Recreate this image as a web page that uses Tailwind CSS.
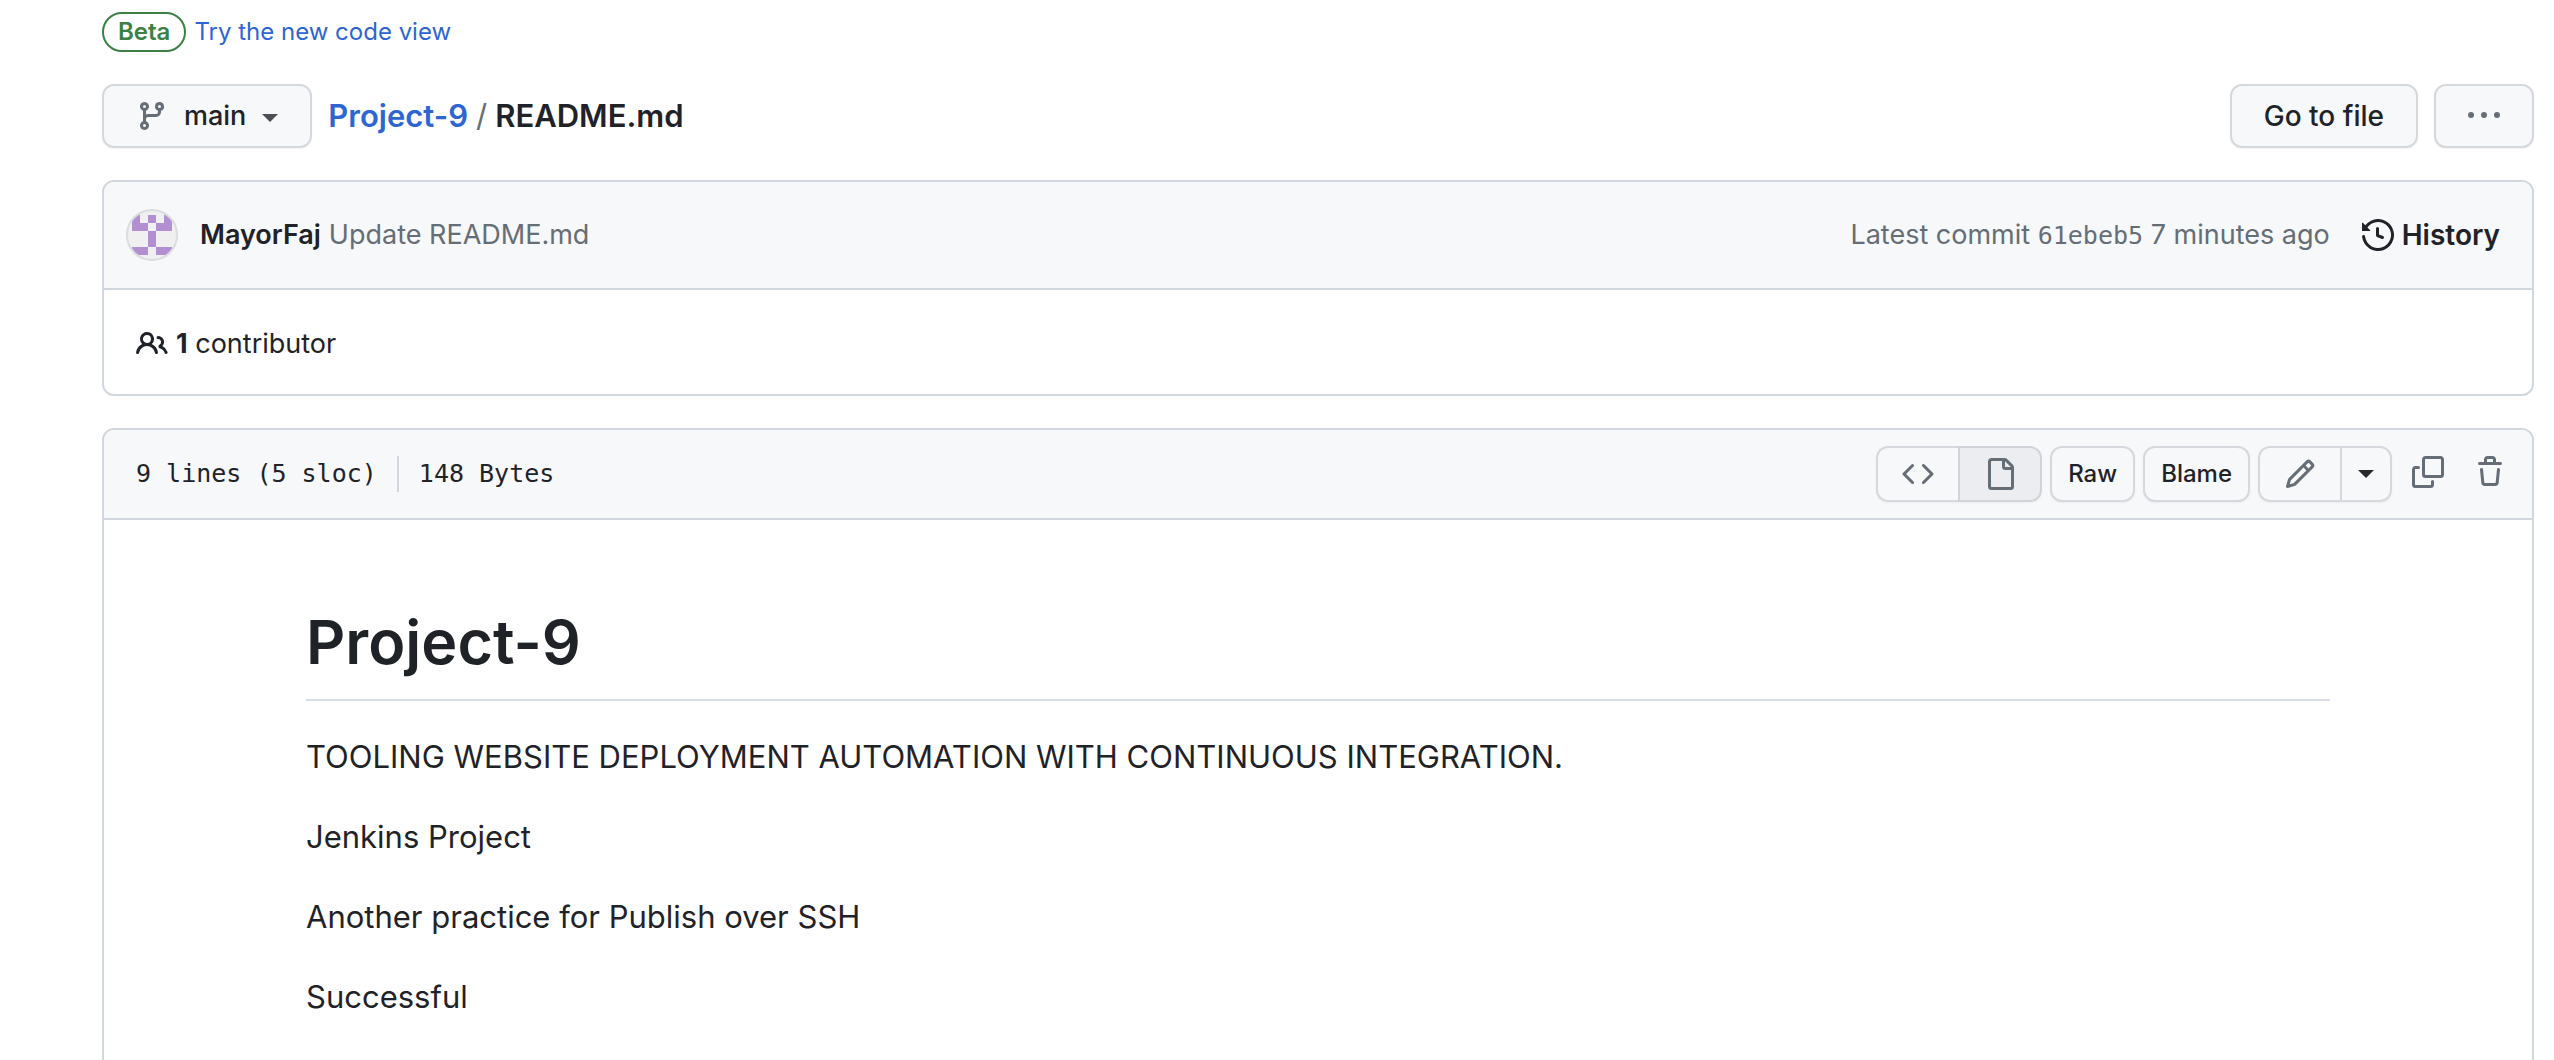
<!DOCTYPE html>
<html lang="en">
<head>
<meta charset="utf-8">
<title>Project-9/README.md</title>
<script src="https://cdn.jsdelivr.net/npm/@tailwindcss/browser@4"></script>
</head>
<body class="bg-white font-[Inter,sans-serif] text-[27px] leading-[42px] text-[#1f2328]">
<main class="ml-[102px] mr-5 pt-3 pb-16">

  <div class="flex items-center gap-2">
    <span class="flex h-10 items-center rounded-full border-2 border-[#3c8143] px-[14px] text-[24px] font-semibold text-[#3c8143]">Beta</span>
    <a href="#" class="text-[24px] leading-10 text-[#2d66d3]">Try the new code view</a>
  </div>

  <div class="mt-8 flex items-center">
    <button type="button" class="flex h-16 items-center rounded-xl border-2 border-[#d5d8dc] bg-[#f6f8fa] px-8 font-medium shadow-xs">
      <svg class="size-8 fill-[#656d76]" viewBox="0 0 16 16" aria-hidden="true"><path d="M9.5 3.25a2.25 2.25 0 1 1 3 2.122V6A2.5 2.5 0 0 1 10 8.5H6a1 1 0 0 0-1 1v1.128a2.251 2.251 0 1 1-1.5 0V5.372a2.25 2.25 0 1 1 1.5 0v1.836A2.493 2.493 0 0 1 6 7h4a1 1 0 0 0 1-1v-.628A2.25 2.25 0 0 1 9.5 3.25Zm-6 0a.75.75 0 1 0 1.5 0 .75.75 0 0 0-1.5 0Zm8.25-.75a.75.75 0 1 0 0 1.5.75.75 0 0 0 0-1.5ZM4.25 12a.75.75 0 1 0 0 1.5.75.75 0 0 0 0-1.5Z"/></svg>
      <span class="ml-4">main</span>
      <svg class="ml-4 mt-1 h-2 w-4 fill-[#4b4f54]" viewBox="0 0 16 8" aria-hidden="true"><path d="M0 0h16L8 8Z"/></svg>
    </button>
    <h2 class="ml-4 flex gap-2 text-[31px] leading-[48px] font-semibold">
      <a href="#" class="text-[#2d66d3]">Project-9</a><span class="font-normal text-[#656d76]">/</span><span>README.md</span>
    </h2>
    <button type="button" class="ml-auto h-16 rounded-xl border-2 border-[#d5d8dc] bg-[#f6f8fa] px-8 text-[28px] font-medium shadow-xs">Go to file</button>
    <button type="button" aria-label="More options" class="ml-4 flex h-16 items-center rounded-xl border-2 border-[#d5d8dc] bg-[#f6f8fa] px-8 shadow-xs">
      <svg class="size-8 fill-[#656d76]" viewBox="0 0 16 16" aria-hidden="true"><path d="M8 9a1.5 1.5 0 1 0 0-3 1.5 1.5 0 0 0 0 3ZM1.5 9a1.5 1.5 0 1 0 0-3 1.5 1.5 0 0 0 0 3Zm13 0a1.5 1.5 0 1 0 0-3 1.5 1.5 0 0 0 0 3Z"/></svg>
    </button>
  </div>

  <section class="mt-8 rounded-xl border-2 border-[#d0d7de]">
    <div class="flex h-[108px] items-center rounded-t-[10px] border-b-2 border-[#d0d7de] bg-[#f6f8fa] pr-8 pl-[22px]">
      <svg class="size-[52px]" viewBox="0 0 52 52" role="img" aria-label="MayorFaj">
        <defs><clipPath id="avatar"><circle cx="26" cy="26" r="24"/></clipPath></defs>
        <circle cx="26" cy="26" r="25" fill="#f0f0f0" stroke="#dadcdf" stroke-width="2"/>
        <path clip-path="url(#avatar)" fill="#b18fd1" d="M6 6h8v8h8v8H6ZM22 6h8v8h-8ZM38 6h8v16H30v-8h8ZM22 22h8v16h-8ZM6 38h16v8H6ZM30 38h16v8H30Z"/>
      </svg>
      <a href="#" class="ml-[22px] font-semibold">MayorFaj</a>
      <a href="#" class="ml-2 text-[#656d76]">Update README.md</a>
      <p class="ml-auto text-[#656d76]">Latest commit <a href="#" class="font-['DejaVu_Sans_Mono',monospace] text-[25px]">61ebeb5</a> 7 minutes ago</p>
      <a href="#" class="ml-8 flex items-center gap-2 text-[28px] font-semibold">
        <svg class="size-8 fill-[#1f2328]" viewBox="0 0 16 16" aria-hidden="true"><path d="m.427 1.927 1.215 1.215a8.002 8.002 0 1 1-1.6 5.685.75.75 0 1 1 1.493-.154 6.5 6.5 0 1 0 1.18-4.458l1.358 1.358A.25.25 0 0 1 3.896 6H.25A.25.25 0 0 1 0 5.75V2.104a.25.25 0 0 1 .427-.177ZM7.75 4a.75.75 0 0 1 .75.75v2.992l2.028.812a.75.75 0 0 1-.557 1.392l-2.5-1A.751.751 0 0 1 7 8.25v-3.5A.75.75 0 0 1 7.75 4Z"/></svg>
        History</a>
    </div>
    <div class="flex h-[104px] items-center gap-2 px-8 pt-1">
      <svg class="size-8 fill-[#1f2328]" viewBox="0 0 16 16" aria-hidden="true"><path d="M2 5.5a3.5 3.5 0 1 1 5.898 2.549 5.508 5.508 0 0 1 3.034 4.084.75.75 0 1 1-1.482.235 4 4 0 0 0-7.9 0 .75.75 0 0 1-1.482-.236A5.507 5.507 0 0 1 3.102 8.05 3.493 3.493 0 0 1 2 5.5ZM11 4a3.001 3.001 0 0 1 2.22 5.018 5.01 5.01 0 0 1 2.56 3.012.749.749 0 0 1-.885.954.752.752 0 0 1-.549-.514 3.507 3.507 0 0 0-2.522-2.372.75.75 0 0 1-.574-.73v-.352a.75.75 0 0 1 .416-.672A1.5 1.5 0 0 0 11 5.5.75.75 0 0 1 11 4Zm-5.5-.5a2 2 0 1 0-.001 3.999A2 2 0 0 0 5.5 3.5Z"/></svg>
      <a href="#"><strong class="font-bold">1</strong> contributor</a>
    </div>
  </section>

  <section class="mt-8 rounded-xl border-2 border-[#d0d7de]">
    <div class="flex h-[90px] items-center rounded-t-[10px] border-b-2 border-[#d0d7de] bg-[#f6f8fa] pr-[26px] pl-8">
      <p class="flex items-center gap-5 font-['DejaVu_Sans_Mono',monospace] text-[25px] leading-9">
        <span>9 lines (5 sloc)</span><span class="h-9 w-[2px] bg-[#d0d7de]"></span><span>148 Bytes</span>
      </p>
      <div class="ml-auto flex items-center gap-2 text-[24px] font-medium">
        <div class="flex h-14 rounded-xl shadow-xs">
          <button type="button" aria-label="Display the source" class="flex w-[82px] items-center justify-center rounded-l-xl border-2 border-r-0 border-[#d5d8dc] bg-[#f6f8fa]"><svg class="size-8 fill-[#656d76]" viewBox="0 0 16 16" aria-hidden="true"><path d="m11.28 3.22 4.25 4.25a.75.75 0 0 1 0 1.06l-4.25 4.25a.749.749 0 0 1-1.275-.326.749.749 0 0 1 .215-.734L13.94 8l-3.72-3.72a.749.749 0 0 1 .326-1.275.749.749 0 0 1 .734.215Zm-6.56 0a.751.751 0 0 1 1.042.018.751.751 0 0 1 .018 1.042L2.06 8l3.72 3.72a.749.749 0 0 1-.326 1.275.749.749 0 0 1-.734-.215L.47 8.53a.75.75 0 0 1 0-1.06Z"/></svg></button>
          <button type="button" aria-label="Display the rendered file" class="flex w-[84px] items-center justify-center rounded-r-xl border-2 border-[#d0d3d8] bg-[#ecedf1]"><svg class="size-8 fill-[#656d76]" viewBox="0 0 16 16" aria-hidden="true"><path d="M2 1.75C2 .784 2.784 0 3.75 0h6.586c.464 0 .909.184 1.237.513l2.914 2.914c.329.328.513.773.513 1.237v9.586A1.75 1.75 0 0 1 13.25 16h-9.5A1.75 1.75 0 0 1 2 14.25Zm1.75-.25a.25.25 0 0 0-.25.25v12.5c0 .138.112.25.25.25h9.5a.25.25 0 0 0 .25-.25V6h-2.75A1.75 1.75 0 0 1 9 4.25V1.5Zm6.75.062V4.25c0 .138.112.25.25.25h2.688l-.011-.013-2.914-2.914-.013-.011Z"/></svg></button>
        </div>
        <button type="button" class="h-14 rounded-xl border-2 border-[#d5d8dc] bg-[#f6f8fa] px-4 shadow-xs">Raw</button>
        <button type="button" class="h-14 rounded-xl border-2 border-[#d5d8dc] bg-[#f6f8fa] px-4 shadow-xs">Blame</button>
        <div class="flex h-14 rounded-xl shadow-xs">
          <button type="button" aria-label="Edit this file" class="flex w-[82px] items-center justify-center rounded-l-xl border-2 border-r-0 border-[#d5d8dc] bg-[#f6f8fa]"><svg class="size-8 fill-[#656d76]" viewBox="0 0 16 16" aria-hidden="true"><path d="M11.013 1.427a1.75 1.75 0 0 1 2.474 0l1.086 1.086a1.75 1.75 0 0 1 0 2.474l-8.61 8.61c-.21.21-.47.364-.756.445l-3.251.93a.75.75 0 0 1-.927-.928l.929-3.25c.081-.286.235-.547.445-.758l8.61-8.61Zm.176 4.823L9.75 4.81l-6.286 6.287a.253.253 0 0 0-.064.108l-.558 1.953 1.953-.558a.253.253 0 0 0 .108-.064Zm1.238-3.763a.25.25 0 0 0-.354 0L10.811 3.75l1.439 1.44 1.263-1.263a.25.25 0 0 0 0-.354Z"/></svg></button>
          <button type="button" aria-label="More edit options" class="flex w-[52px] items-center justify-center rounded-r-xl border-2 border-[#d5d8dc] bg-[#f6f8fa]"><svg class="h-2 w-4 fill-[#24292f]" viewBox="0 0 16 8" aria-hidden="true"><path d="M0 0h16L8 8Z"/></svg></button>
        </div>
        <div class="ml-3 flex gap-[30px] pb-1">
          <button type="button" aria-label="Copy raw contents"><svg class="size-8 fill-[#656d76]" viewBox="0 0 16 16" aria-hidden="true"><path d="M0 6.75C0 5.784.784 5 1.75 5h1.5a.75.75 0 0 1 0 1.5h-1.5a.25.25 0 0 0-.25.25v7.5c0 .138.112.25.25.25h7.5a.25.25 0 0 0 .25-.25v-1.5a.75.75 0 0 1 1.5 0v1.5A1.75 1.75 0 0 1 9.25 16h-7.5A1.75 1.75 0 0 1 0 14.25Z"/><path d="M5 1.75C5 .784 5.784 0 6.75 0h7.5C15.216 0 16 .784 16 1.75v7.5A1.75 1.75 0 0 1 14.25 11h-7.5A1.75 1.75 0 0 1 5 9.25Zm1.75-.25a.25.25 0 0 0-.25.25v7.5c0 .138.112.25.25.25h7.5a.25.25 0 0 0 .25-.25v-7.5a.25.25 0 0 0-.25-.25Z"/></svg></button>
          <button type="button" aria-label="Delete this file"><svg class="size-8 fill-[#656d76]" viewBox="0 0 16 16" aria-hidden="true"><path d="M11 1.75V3h2.25a.75.75 0 0 1 0 1.5H2.75a.75.75 0 0 1 0-1.5H5V1.75C5 .784 5.784 0 6.75 0h2.5C10.216 0 11 .784 11 1.75ZM4.496 6.675l.66 6.6a.25.25 0 0 0 .249.225h5.19a.25.25 0 0 0 .249-.225l.66-6.6a.75.75 0 0 1 1.492.149l-.66 6.6A1.748 1.748 0 0 1 10.595 15h-5.19a1.75 1.75 0 0 1-1.741-1.575l-.66-6.6a.75.75 0 1 1 1.492-.15ZM6.5 1.75V3h3V1.75a.25.25 0 0 0-.25-.25h-2.5a.25.25 0 0 0-.25.25Z"/></svg></button>
        </div>
      </div>
    </div>
    <article class="mx-auto flex max-w-[2024px] flex-col gap-8 py-[82px] text-[31px] leading-[48px]">
      <h1 class="border-b-2 border-[#d8dee4] pb-[17px] text-[61px] leading-20 font-semibold">Project-9</h1>
      <p>TOOLING WEBSITE DEPLOYMENT AUTOMATION WITH CONTINUOUS INTEGRATION.</p>
      <p>Jenkins Project</p>
      <p>Another practice for Publish over SSH</p>
      <p>Successful</p>
    </article>
  </section>
</main>
</body>
</html>
